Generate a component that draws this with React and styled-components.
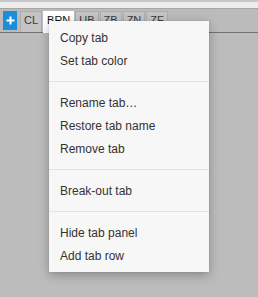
import React from "react";
import styled, { createGlobalStyle } from "styled-components";

const GlobalStyle = createGlobalStyle`
  html, body {
    margin: 0;
    padding: 0;
    background: #bcbcbc;
    font-family: "Liberation Sans", Arial, sans-serif;
  }
  #root {
    min-height: 297px;
  }
`;

const Page = styled.div`
  position: relative;
  width: 258px;
  height: 297px;
  background: #bcbcbc;
  overflow: hidden;
`;

const TopStrip = styled.div`
  height: 6px;
  background: #ededed;
  border-top: 2px solid #c8c8c8;
  border-bottom: 1px solid #a6a6a6;
`;

const TabBar = styled.div`
  display: flex;
  align-items: flex-start;
  height: 21px;
  padding: 2px 0 0 3px;
  border-bottom: 1px solid #727272;
  background: #bbbbbb;
`;

const AddButton = styled.div`
  width: 14px;
  height: 19px;
  margin-right: 3px;
  background: #1b8ed9;
  display: flex;
  align-items: center;
  justify-content: center;
`;

const Tab = styled.div`
  box-sizing: border-box;
  height: ${p => (p.$active ? "22px" : "21px")};
  min-width: ${p => p.$w}px;
  padding: 2px 3px 0;
  margin-right: 1px;
  font-size: 11px;
  line-height: 13px;
  text-align: center;
  color: ${p => (p.$active ? "#111" : "#3a3a3a")};
  background: ${p => (p.$active ? "#ffffff" : "#c4c4c4")};
  border: 1px solid ${p => (p.$active ? "#ffffff" : "#adadad")};
  border-bottom: none;
  position: relative;
  z-index: ${p => (p.$active ? 1 : 0)};
`;

const Menu = styled.div`
  position: absolute;
  top: 21px;
  left: 49px;
  width: 160px;
  padding: 5px 0;
  background: #f7f7f7;
  box-shadow: 0 3px 10px rgba(0, 0, 0, 0.28), 0 0 1px rgba(0, 0, 0, 0.2);
  z-index: 5;
`;

const Item = styled.div`
  box-sizing: border-box;
  height: 23px;
  padding: 1px 0 0 11px;
  line-height: 22px;
  font-size: 12px;
  color: #333333;
`;

const Separator = styled.div`
  height: 1px;
  margin: 9px 0;
  background: #e2e2e2;
`;

const tabs = [
  { label: "CL", w: 20 },
  { label: "BRN", w: 25, active: true },
  { label: "UB", w: 21 },
  { label: "ZB", w: 22 },
  { label: "ZN", w: 21 },
  { label: "ZF", w: 20 }
];

const groups = [
  ["Copy tab", "Set tab color"],
  ["Rename tab…", "Restore tab name", "Remove tab"],
  ["Break-out tab"],
  ["Hide tab panel", "Add tab row"]
];

const App = () => {
  return (
    <Page>
      <GlobalStyle />
      <TopStrip />
      <TabBar>
        <AddButton>
          <svg width="9" height="9" viewBox="0 0 9 9">
            <path d="M4.5 0.5v8M0.5 4.5h8" stroke="#fff" strokeWidth="2" />
          </svg>
        </AddButton>
        {tabs.map(t => (
          <Tab key={t.label} $w={t.w} $active={t.active}>
            {t.label}
          </Tab>
        ))}
      </TabBar>
      <Menu>
        {groups.map((g, i) => (
          <React.Fragment key={i}>
            {i > 0 && <Separator />}
            {g.map(label => (
              <Item key={label}>{label}</Item>
            ))}
          </React.Fragment>
        ))}
      </Menu>
    </Page>
  );
};

export default App;
